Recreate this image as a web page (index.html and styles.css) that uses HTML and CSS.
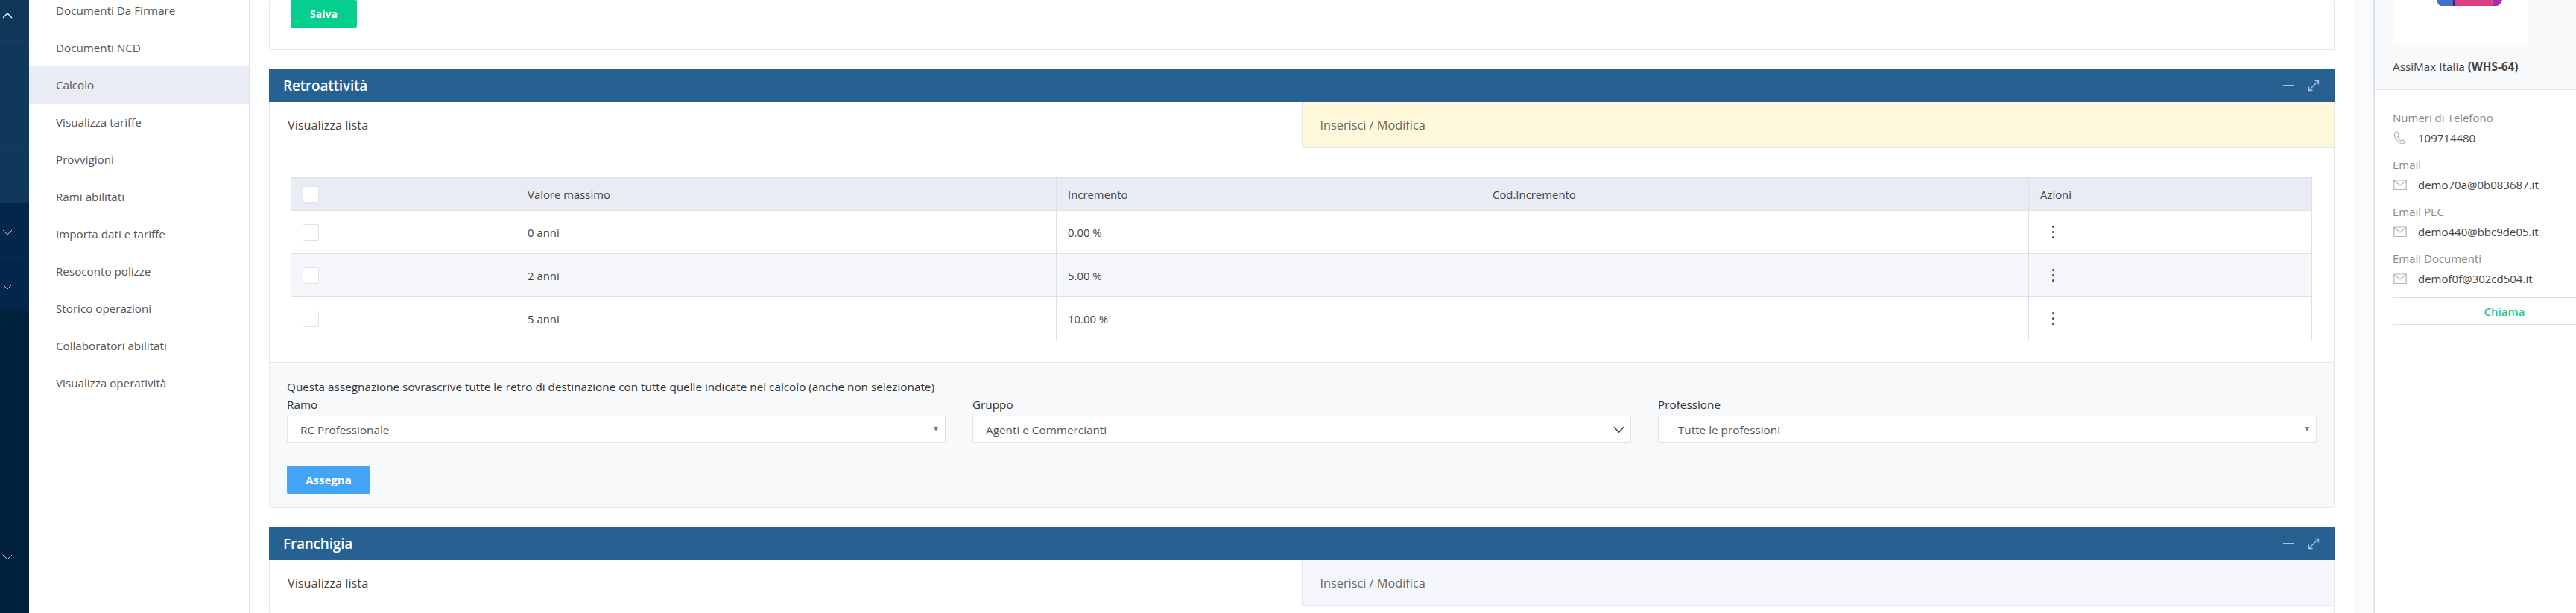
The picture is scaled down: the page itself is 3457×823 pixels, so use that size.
FILE: index.html
```html
<!DOCTYPE html>
<html lang="it">
    <head>
        <meta charset="UTF-8" />
        <meta name="viewport" content="width=device-width, initial-scale=1.0" />
        <title>Calcolo</title>
        <link rel="stylesheet" href="styles.css">
    </head>
    <body>
        <div class="app">
            <div class="rail">
                <div class="rail-item rail-first">
                    <svg class="rail-chevron" viewBox="0 0 14 8"><path d="M1 7l6-6 6 6" /></svg>
                </div>
                <div class="rail-item rail-sub"></div>
                <div class="rail-item rail-sub"></div>
                <div class="rail-item rail-sub rail-sub-last"></div>
                <div class="rail-item rail-closed">
                    <svg class="rail-chevron" viewBox="0 0 14 8"><path d="M1 1l6 6 6-6" /></svg>
                </div>
                <div class="rail-item rail-closed">
                    <svg class="rail-chevron" viewBox="0 0 14 8"><path d="M1 1l6 6 6-6" /></svg>
                </div>
                <div class="rail-item rail-closed rail-last">
                    <svg class="rail-chevron" viewBox="0 0 14 8"><path d="M1 1l6 6 6-6" /></svg>
                </div>
            </div>

            <ul class="side-nav">
                <li>Documenti Da Firmare</li>
                <li>Documenti NCD</li>
                <li class="active">Calcolo</li>
                <li>Visualizza tariffe</li>
                <li>Provvigioni</li>
                <li>Rami abilitati</li>
                <li>Importa dati e tariffe</li>
                <li>Resoconto polizze</li>
                <li>Storico operazioni</li>
                <li>Collaboratori abilitati</li>
                <li>Visualizza operatività</li>
            </ul>

            <div class="content">
                <div class="card card-top">
                    <button class="btn btn-green">Salva</button>
                </div>

                <div class="card">
                    <div class="card-head">
                        <h2>Retroattività</h2>
                        <div class="card-tools">
                            <span class="tool-minus"></span>
                            <svg class="tool-expand" viewBox="0 0 16 16"><path d="M9.5 1.5h5v5M14.5 1.5l-13 13M1.5 9.5v5h5" /></svg>
                        </div>
                    </div>
                    <div class="tabs">
                        <div class="tab tab-on">Visualizza lista</div>
                        <div class="tab tab-edit">Inserisci / Modifica</div>
                    </div>
                    <div class="table-wrap">
                        <table class="rates">
                            <thead>
                                <tr>
                                    <th class="col-check"><span class="check"></span></th>
                                    <th class="col-value">Valore massimo</th>
                                    <th class="col-inc">Incremento</th>
                                    <th class="col-code">Cod.Incremento</th>
                                    <th>Azioni</th>
                                </tr>
                            </thead>
                            <tbody>
                                <tr>
                                    <td><span class="check"></span></td>
                                    <td>0 anni</td>
                                    <td>0.00 %</td>
                                    <td></td>
                                    <td><span class="dots"><i></i><i></i><i></i></span></td>
                                </tr>
                                <tr class="even">
                                    <td><span class="check"></span></td>
                                    <td>2 anni</td>
                                    <td>5.00 %</td>
                                    <td></td>
                                    <td><span class="dots"><i></i><i></i><i></i></span></td>
                                </tr>
                                <tr>
                                    <td><span class="check"></span></td>
                                    <td>5 anni</td>
                                    <td>10.00 %</td>
                                    <td></td>
                                    <td><span class="dots"><i></i><i></i><i></i></span></td>
                                </tr>
                            </tbody>
                        </table>
                    </div>
                    <div class="assign">
                        <p class="assign-note">Questa assegnazione sovrascrive tutte le retro di destinazione con tutte quelle indicate nel calcolo (anche non selezionate)</p>
                        <div class="assign-fields">
                            <div>
                                <label>Ramo</label>
                                <div class="select">RC Professionale<span class="caret"></span></div>
                            </div>
                            <div>
                                <label>Gruppo</label>
                                <div class="select">Agenti e Commercianti
                                    <svg class="select-chevron" viewBox="0 0 14 9"><path d="M1 1l6 6.5L13 1" /></svg>
                                </div>
                            </div>
                            <div>
                                <label>Professione</label>
                                <div class="select">- Tutte le professioni<span class="caret"></span></div>
                            </div>
                        </div>
                        <button class="btn btn-blue">Assegna</button>
                    </div>
                </div>

                <div class="card card-last">
                    <div class="card-head">
                        <h2>Franchigia</h2>
                        <div class="card-tools">
                            <span class="tool-minus"></span>
                            <svg class="tool-expand" viewBox="0 0 16 16"><path d="M9.5 1.5h5v5M14.5 1.5l-13 13M1.5 9.5v5h5" /></svg>
                        </div>
                    </div>
                    <div class="tabs">
                        <div class="tab tab-on">Visualizza lista</div>
                        <div class="tab tab-off">Inserisci / Modifica</div>
                    </div>
                </div>
            </div>

            <div class="panel">
                <div class="panel-head">
                    <div class="logo-box">
                        <svg class="logo" viewBox="0 0 88 8">
                            <path d="M0 0h22v8H6Q2 8 0 0z" fill="#4470c4" />
                            <path d="M22 0h3l-1 8h-2z" fill="#1f2f7c" />
                            <path d="M25 0h50l-1 8H24z" fill="#de3c80" />
                            <path d="M75 0h13q-3 8-8 8h-6z" fill="#ab2d9b" />
                        </svg>
                    </div>
                    <div class="panel-name">AssiMax Italia <b>(WHS-64)</b></div>
                </div>
                <div class="panel-body">
                    <div class="info-label">Numeri di Telefono</div>
                    <div class="info-value">
                        <svg class="info-icon" viewBox="0 0 18 18"><path d="M3 1.500 1.500 3c-.6 3 1 6.500 3.500 9.300 2.600 2.800 6 4.700 8.500 4.500l2.500-2-3.500-3-1.800 1.200c-1.600-.7-4.300-3.500-5-5.400L7.500 6 5 1z" /></svg>
                        109714480
                    </div>
                    <div class="info-label">Email</div>
                    <div class="info-value">
                        <svg class="info-icon" viewBox="0 0 18 18"><path d="M.8 3h16.400v12.500H.8zM.8 3.500 9 10l8.200-6.500" /></svg>
                        demo70a@0b083687.it
                    </div>
                    <div class="info-label">Email PEC</div>
                    <div class="info-value">
                        <svg class="info-icon" viewBox="0 0 18 18"><path d="M.8 3h16.400v12.500H.8zM.8 3.500 9 10l8.200-6.500" /></svg>
                        demo440@bbc9de05.it
                    </div>
                    <div class="info-label">Email Documenti</div>
                    <div class="info-value">
                        <svg class="info-icon" viewBox="0 0 18 18"><path d="M.8 3h16.400v12.500H.8zM.8 3.500 9 10l8.200-6.500" /></svg>
                        demof0f@302cd504.it
                    </div>
                    <button class="btn-call">Chiama</button>
                </div>
            </div>
        </div>
    </body>
</html>
```

FILE: styles.css
```css
html,
body {
    margin: 0;
    height: 100%;
    overflow: hidden;
}

body {
    font-family: "Open Sans", "Noto Sans", sans-serif;
    font-size: 15px;
    color: #444;
    background-color: #fafbfd;
}

.app {
    display: flex;
    width: 3538px;
    height: 823px;
}

/* dark rail on the left */
.rail {
    flex: none;
    width: 39px;
    display: flex;
    flex-direction: column;
    background-color: #00213c;
}

.rail-item {
    box-sizing: border-box;
    border-bottom: 1px solid rgba(255, 255, 255, 0.03);
}

.rail-first {
    height: 55px;
    padding-top: 17px;
    background-color: #10375a;
}

.rail-sub {
    height: 72.500px;
    background-color: #0f385b;
}

.rail-sub-last {
    height: 72px;
    border-bottom: none;
}

.rail-closed {
    height: 73px;
    padding-top: 36px;
    background-color: #03264a;
}

.rail-last {
    flex: 1;
    height: auto;
    padding-top: 326px;
    background-color: #00213c;
    border-bottom: none;
}

.rail-chevron {
    display: block;
    width: 14px;
    height: 8px;
    margin-left: 3px;
    fill: none;
    stroke: #b9c9d9;
    stroke-width: 1;
}

.rail-first .rail-chevron {
    stroke: #fff;
    stroke-width: 1.300;
}

/* second level menu */
.side-nav {
    flex: none;
    box-sizing: border-box;
    width: 297px;
    margin: -11px 0 0;
    padding: 0;
    list-style: none;
    background-color: #fff;
    border-right: 2px solid #dfe3ec;
}

.side-nav li {
    height: 50px;
    padding-left: 36px;
    line-height: 50px;
    font-size: 15.200px;
    color: #555;
}

.side-nav .active {
    background-color: #e9ecf4;
}

/* main column */
.content {
    flex: none;
    box-sizing: border-box;
    width: 2823px;
    padding: 0 26px 0 25px;
    background-color: #fff;
}

.card {
    margin-bottom: 26px;
    background-color: #fff;
    border: 1px solid #e6e8ee;
    border-radius: 2px;
}

.card-top {
    height: 67px;
    box-sizing: border-box;
    padding-left: 28px;
    border-top: none;
}

.card-last {
    box-sizing: border-box;
    height: 116px;
    margin-bottom: 0;
    border-bottom: none;
}

.card-head {
    display: flex;
    justify-content: space-between;
    align-items: center;
    height: 44px;
    margin: -1px -1px 0;
    padding: 0 20px 0 19px;
    background-color: #266191;
}

.card-head h2 {
    margin: 0;
    font-size: 19px;
    font-weight: 600;
    letter-spacing: -0.2px;
    color: #fff;
}

.card-tools {
    display: flex;
    align-items: center;
    gap: 18px;
}

.tool-minus {
    width: 15px;
    height: 2px;
    background-color: #a8c4e0;
}

.tool-expand {
    width: 16px;
    height: 16px;
    fill: none;
    stroke: #a8c4e0;
    stroke-width: 1.300;
}

.tabs {
    display: flex;
    height: 62px;
}

.tab {
    flex: 1;
    box-sizing: border-box;
    padding-top: 20px;
    font-size: 16.300px;
}

.tab-on {
    padding-left: 24px;
    color: #444;
}

.tab-edit,
.tab-off {
    padding-left: 24px;
    color: #666;
    border-left: 1px solid #e3e6ec;
    border-bottom: 2px solid #e3e6ec;
}

.tab-edit {
    background-color: #fef7d9;
}

.tab-off {
    background-color: #f4f6fa;
}

.table-wrap {
    padding: 39px 29px 29px 28px;
}

.rates {
    width: 100%;
    table-layout: fixed;
    border-collapse: collapse;
    font-size: 14.900px;
}

.rates th,
.rates td {
    box-sizing: border-box;
    padding: 0 0 0 15px;
    border: 1px solid #dcdfe6;
    font-weight: 400;
    text-align: left;
    color: #444;
}

.rates th {
    height: 44px;
    background-color: #e9ecf4;
}

.rates td {
    height: 58px;
}

.rates .even td {
    background-color: #f4f6fa;
}

.col-check {
    width: 302px;
}

.col-value {
    width: 725px;
}

.col-inc {
    width: 570px;
}

.col-code {
    width: 735px;
}

.check {
    display: block;
    box-sizing: border-box;
    width: 22px;
    height: 22px;
    background-color: #fff;
    border: 1px solid #dfe2e8;
    border-radius: 2px;
}

.dots {
    display: flex;
    flex-direction: column;
    gap: 4px;
    width: 4px;
    margin-left: 16px;
}

.dots i {
    width: 3px;
    height: 3px;
    background-color: #444;
    border-radius: 50%;
}

.assign {
    box-sizing: border-box;
    height: 195px;
    padding: 22px 23px 0;
    background-color: #f8f9fb;
    border-top: 1px solid #e3e6ec;
}

.assign-note {
    margin: 0 0 4px;
    font-size: 15.300px;
    line-height: 20px;
    font-weight: 500;
    color: #333;
}

.assign-fields {
    display: grid;
    grid-template-columns: repeat(3, 1fr);
    gap: 36px;
}

.assign-fields label {
    display: block;
    margin-bottom: 5px;
    font-size: 15.300px;
    line-height: 20px;
    font-weight: 500;
    color: #333;
}

.select {
    display: flex;
    justify-content: space-between;
    align-items: center;
    box-sizing: border-box;
    height: 37px;
    padding: 0 8px 0 17px;
    font-size: 15.300px;
    color: #555;
    background-color: #fff;
    border: 1px solid #e0e3e9;
    border-radius: 2px;
}

.caret {
    width: 0;
    height: 0;
    margin: -2px 1px 0 0;
    border-left: 3px solid transparent;
    border-right: 3px solid transparent;
    border-top: 6px solid #777;
}

.select-chevron {
    width: 15px;
    height: 10px;
    fill: none;
    stroke: #444;
    stroke-width: 1.500;
}

.btn {
    display: block;
    padding: 0;
    border: none;
    border-radius: 2px;
    color: #fff;
    font-family: inherit;
    font-weight: 700;
}

.btn-green {
    width: 89px;
    height: 37px;
    font-size: 14px;
    background-color: #05ce8f;
}

.btn-blue {
    width: 112px;
    height: 38px;
    margin-top: 30px;
    font-size: 15px;
    background-color: #44a5f5;
}

/* right panel, runs past the window edge */
.panel {
    flex: none;
    box-sizing: border-box;
    width: 353px;
    margin-left: 26px;
    background-color: #fff;
    border-left: 2px solid #dfe3ec;
}

.panel-head {
    box-sizing: border-box;
    height: 121px;
    padding-left: 24px;
    background-color: #f8f9fb;
    border-bottom: 1px solid #e3e6ec;
}

.logo-box {
    width: 182px;
    height: 61px;
    background-color: #fff;
}

.logo {
    display: block;
    width: 88px;
    height: 8px;
    margin-left: 59px;
}

.panel-name {
    margin-top: 18px;
    line-height: 20px;
    font-size: 15.300px;
    color: #444;
}

.panel-body {
    padding: 26px 0 0 24px;
}

.info-label {
    line-height: 22px;
    font-size: 15px;
    color: #888;
}

.info-value {
    display: flex;
    align-items: center;
    gap: 15px;
    height: 22px;
    margin: 5px 0 14px;
    padding-left: 1px;
    font-size: 15px;
    color: #444;
}

.info-icon {
    flex: none;
    width: 18px;
    height: 18px;
    fill: none;
    stroke: #b4b4b4;
    stroke-width: 1.200;
}

.btn-call {
    display: block;
    width: 300px;
    height: 37px;
    margin-top: 4px;
    padding: 0;
    font-family: inherit;
    font-size: 15px;
    font-weight: 600;
    color: #1fc78f;
    background-color: #fff;
    border: 1px solid #c5ebdf;
    border-radius: 2px;
}
```
